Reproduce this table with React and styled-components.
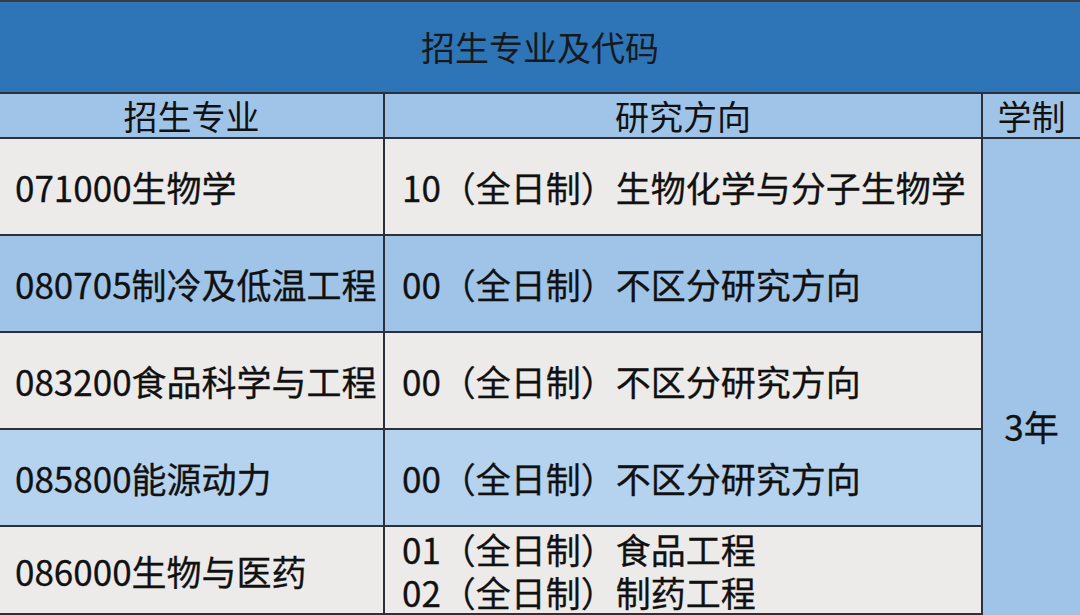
import React from 'react';
import styled, { createGlobalStyle } from 'styled-components';

const GlobalStyle = createGlobalStyle`
  html, body {
    margin: 0;
    padding: 0;
    overflow: hidden;
    background: #eceae9;
  }
  body {
    font-family: "Noto Sans CJK SC", "Noto Sans", sans-serif;
    color: #111;
  }
`;

const tones = {
  gray: '#ecebea',
  blue: '#9fc4e8',
  light: '#b5d2ee',
};

const Page = styled.div`
  width: 1080px;
  height: 615px;
  overflow: hidden;
  border-top: 2px solid #3a3d44;
`;

const Table = styled.div`
  display: grid;
  grid-template-columns: 383px 596px 97px;
  grid-template-rows: 90px 43px 95px 95px 95px 95px 86px 96px;
  gap: 2px;
  background: #2b303a;
`;

const TitleCell = styled.div`
  grid-column: 1 / -1;
  background: #2e75b8;
  display: flex;
  align-items: center;
  justify-content: center;
  font-size: 34px;
  color: #161a20;
  padding-bottom: 2px;
`;

const HeadCell = styled.div`
  background: #9fc4e8;
  display: flex;
  align-items: center;
  justify-content: center;
  font-size: 34px;
  line-height: 1;
`;

const Cell = styled.div`
  background: ${(p) => tones[p.$tone]};
  display: flex;
  flex-direction: column;
  justify-content: center;
  font-size: 35px;
  line-height: 43px;
  white-space: nowrap;
  -webkit-text-stroke: 0.3px #111;
`;

const MajorCell = styled(Cell)`
  padding-left: 15px;
`;

const DirCell = styled(Cell)`
  padding-left: 17px;
`;

const DirLine = styled.div`
  height: 43px;
`;

const DurationCell = styled.div`
  grid-column: 3;
  grid-row: 3 / span 6;
  background: #9fc4e8;
  display: flex;
  align-items: center;
  justify-content: center;
  font-size: 35px;
  -webkit-text-stroke: 0.3px #111;
`;

const rows = [
  { major: '071000生物学', dirs: ['10（全日制）生物化学与分子生物学'], tone: 'gray' },
  { major: '080705制冷及低温工程', dirs: ['00（全日制）不区分研究方向'], tone: 'blue' },
  { major: '083200食品科学与工程', dirs: ['00（全日制）不区分研究方向'], tone: 'gray' },
  { major: '085800能源动力', dirs: ['00（全日制）不区分研究方向'], tone: 'light' },
  { major: '086000生物与医药', dirs: ['01（全日制）食品工程', '02（全日制）制药工程'], tone: 'gray' },
  { major: '', dirs: [], tone: 'blue' },
];

export default function App() {
  return (
    <Page>
      <GlobalStyle />
      <Table>
        <TitleCell>招生专业及代码</TitleCell>
        <HeadCell>招生专业</HeadCell>
        <HeadCell>研究方向</HeadCell>
        <HeadCell>学制</HeadCell>
        {rows.map((r, i) => (
          <React.Fragment key={i}>
            <MajorCell $tone={r.tone} style={{ gridRow: i + 3, gridColumn: 1 }}>
              {r.major}
            </MajorCell>
            <DirCell $tone={r.tone} style={{ gridRow: i + 3, gridColumn: 2 }}>
              {r.dirs.map((d) => (
                <DirLine key={d}>{d}</DirLine>
              ))}
            </DirCell>
          </React.Fragment>
        ))}
        <DurationCell>3年</DurationCell>
      </Table>
    </Page>
  );
}
